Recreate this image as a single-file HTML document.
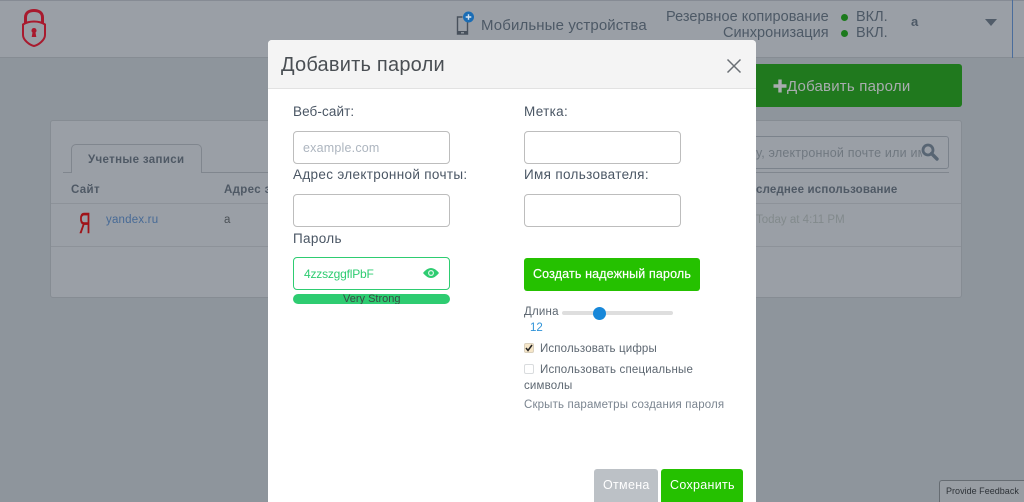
<!DOCTYPE html>
<html><head><meta charset="utf-8">
<style>
html,body{margin:0;padding:0;width:1024px;height:502px;overflow:hidden;background:#8e959c}
*{box-sizing:border-box}
body{position:relative;font-family:"Liberation Sans","DejaVu Sans",sans-serif}
.t{position:absolute;white-space:nowrap;line-height:1}
.b{position:absolute}
.inp{position:absolute;background:#fff;border:1px solid #bdbdbd;border-radius:4px;width:157px;height:33px}
.lab{color:#4a5664;font-size:13.5px;letter-spacing:.33px}
</style></head><body>
<div class="b" style="left:0;top:0;width:1024px;height:58px;background:#9a9fa6;border-top:1px solid #868b94;border-bottom:1px solid #868c93"></div>
<div class="b" style="left:1012px;top:0;width:1px;height:58px;background:#4a6d9c"></div>
<svg class="b" style="left:20px;top:8px" width="30" height="40" viewBox="0 0 30 40">
<path d="M5.500 15V9.500C5.500 4.500 9.500 2.500 14 2.500S22.500 4.500 22.500 9.500V15" fill="none" stroke="#a81a2e" stroke-width="3"/>
<path d="M14 13.500C9.500 13.500 6 14.500 3 16.500V27C3 32 9.500 37 14 38C18.500 37 25 32 25 27V16.500C22 14.500 18.500 13.500 14 13.500Z" fill="none" stroke="#a81a2e" stroke-width="2"/>
<path d="M14 20a2.500 2.500 0 0 1 1.500 4.500l.8 4.500h-4.600l.8-4.500a2.500 2.500 0 0 1 1.500-4.500Z" fill="#a81a2e"/>
</svg>
<svg class="b" style="left:455px;top:11px" width="22" height="26" viewBox="0 0 22 26">
<path d="M7.500 6H2.500V23H12.500V11" fill="none" stroke="#48515c" stroke-width="1.400"/>
<rect x="2" y="20" width="11" height="3.500" fill="#48515c"/><rect x="6" y="21" width="3" height="1.500" fill="#8e959c"/>
<circle cx="13.500" cy="6" r="5.500" fill="#1b6db5"/><path d="M13.500 3.200v5.600M10.700 6h5.600" stroke="#d7e4f0" stroke-width="1.400"/>
</svg>
<div class="t" style="left:481px;top:18px;font-size:15px;color:#4d5966;letter-spacing:.12px">Мобильные устройства</div>
<div class="t" style="left:666px;top:10px;font-size:14.500px;color:#4d5966;letter-spacing:.05px">Резервное копирование</div>
<div class="t" style="left:723px;top:26px;font-size:14.500px;color:#4d5966;letter-spacing:.05px">Синхронизация</div>
<div class="b" style="left:841px;top:14px;width:7px;height:7px;border-radius:50%;background:#1c7a1c"></div>
<div class="b" style="left:841px;top:30px;width:7px;height:7px;border-radius:50%;background:#1c7a1c"></div>
<div class="t" style="left:856px;top:10px;font-size:14.500px;color:#4d5966">ВКЛ.</div>
<div class="t" style="left:856px;top:26px;font-size:14.500px;color:#4d5966">ВКЛ.</div>
<div class="t" style="left:911px;top:15px;font-size:13px;font-weight:bold;color:#4d5966">a</div>
<div class="b" style="left:985px;top:19px;border-left:6px solid transparent;border-right:6px solid transparent;border-top:7px solid #515c69"></div>

<div class="b" style="left:750px;top:64px;width:212px;height:43px;background:#20791e;border-radius:3px"></div>
<svg class="b" style="left:773px;top:79px" width="14" height="14" viewBox="0 0 14 14"><path d="M7 0.500V13.500M0.500 7H13.500" stroke="#a9adaf" stroke-width="3.400"/></svg>
<div class="t" style="left:787px;top:79px;font-size:15px;color:#a9adaf;letter-spacing:.2px">Добавить пароли</div>

<div class="b" style="left:50px;top:120px;width:912px;height:178px;background:#9a9fa6;border:1px solid #868c93;border-radius:3px"></div>
<div class="b" style="left:63px;top:172px;width:886px;height:1px;background:#80868e"></div>
<div class="b" style="left:71px;top:144px;width:131px;height:29px;background:#9a9fa6;border:1px solid #80868e;border-bottom:none;border-radius:5px 5px 0 0"></div>
<div class="t" style="left:88px;top:155px;font-size:11.500px;font-weight:bold;color:#4f5965;letter-spacing:.35px">Учетные записи</div>
<div class="t" style="left:71px;top:185px;font-size:11.500px;font-weight:bold;color:#4f5965;letter-spacing:.35px">Сайт</div>
<div class="t" style="left:224px;top:185px;font-size:11.500px;font-weight:bold;color:#4f5965;letter-spacing:.35px">Адрес э</div>
<div class="t" style="left:756px;top:185px;font-size:11.500px;font-weight:bold;color:#4f5965;letter-spacing:.17px">следнее использование</div>
<div class="b" style="left:51px;top:203px;width:910px;height:1px;background:#8d9299"></div>
<div class="b" style="left:51px;top:246px;width:910px;height:1px;background:#8d9299"></div>
<div class="t" style="left:79px;top:210px;font-size:29px;color:#a01318;transform:scaleX(.55);transform-origin:left;-webkit-text-stroke:.5px #a01318">Я</div>
<div class="t" style="left:106px;top:215px;font-size:11.500px;color:#476a96;letter-spacing:.2px">yandex.ru</div>
<div class="t" style="left:224px;top:215px;font-size:11.500px;color:#4a5056">a</div>
<div class="t" style="left:756px;top:215px;font-size:11.500px;color:#828a8c">Today at 4:11 PM</div>
<div class="b" style="left:740px;top:136px;width:209px;height:33px;background:#9a9fa6;border:1px solid #7b828b;border-radius:3px"></div>
<div class="t" style="left:756px;top:147px;font-size:12.500px;color:#707880;letter-spacing:.2px;width:166px;overflow:hidden">у, электронной почте или им</div>
<svg class="b" style="left:920px;top:142px" width="20" height="20" viewBox="0 0 20 20"><circle cx="8" cy="8" r="5" fill="none" stroke="#586573" stroke-width="2.800"/><path d="M11.500 11.500L17 17" stroke="#586573" stroke-width="3.400" stroke-linecap="round"/></svg>

<div class="b" style="left:268px;top:40px;width:488px;height:462px;background:#fff;border-radius:4px 4px 0 0"></div>
<div class="b" style="left:268px;top:40px;width:488px;height:49px;background:#f4f4f4;border-bottom:1px solid #e2e2e2;border-radius:4px 4px 0 0"></div>
<div class="t" style="left:281px;top:55px;font-size:20px;color:#4a4f54;letter-spacing:.22px">Добавить пароли</div>
<svg class="b" style="left:726px;top:58px" width="16" height="16" viewBox="0 0 16 16"><path d="M1.500 1.500L14.500 14.500M14.500 1.500L1.500 14.500" stroke="#6a6f74" stroke-width="1.500"/></svg>

<div class="t lab" style="left:293px;top:105px;letter-spacing:.1px">Веб-сайт:</div>
<div class="inp" style="left:293px;top:131px"></div>
<div class="t" style="left:303px;top:142px;font-size:12.500px;color:#adb5bf;letter-spacing:.2px">example.com</div>
<div class="t lab" style="left:524px;top:105px">Метка:</div>
<div class="inp" style="left:524px;top:131px"></div>
<div class="t lab" style="left:293px;top:168px">Адрес электронной почты:</div>
<div class="inp" style="left:293px;top:194px"></div>
<div class="t lab" style="left:524px;top:168px">Имя пользователя:</div>
<div class="inp" style="left:524px;top:194px"></div>
<div class="t lab" style="left:293px;top:232px">Пароль</div>
<div class="inp" style="left:293px;top:257px;border-color:#2ecc71"></div>
<div class="t" style="left:304px;top:268px;font-size:12px;color:#2ecc71;letter-spacing:-.2px">4zzszggflPbF</div>
<svg class="b" style="left:422px;top:266px" width="18" height="14" viewBox="0 0 18 14"><path d="M1 7Q9 -3 17 7Q9 17 1 7Z" fill="#2ecc71"/><circle cx="9" cy="7" r="3" fill="#dff5e8"/><circle cx="9" cy="7" r="1.800" fill="#2ecc71"/></svg>
<div class="b" style="left:293px;top:294px;width:157px;height:10px;background:#2ecc71;border-radius:5px;overflow:hidden"><div class="t" style="left:50px;top:0;font-size:11px;color:#3a4a44">Very Strong</div></div>

<div class="b" style="left:524px;top:258px;width:176px;height:33px;background:#25c100;border-radius:3px"></div>
<div class="t" style="left:533px;top:268px;font-size:12.500px;color:#fff;letter-spacing:.14px;-webkit-text-stroke:.2px #fff">Создать надежный пароль</div>
<div class="t" style="left:524px;top:307px;font-size:11.500px;color:#5d6771;letter-spacing:.2px">Длина</div>
<div class="b" style="left:562px;top:311px;width:111px;height:4px;background:#dedede;border-radius:2px"></div>
<div class="b" style="left:593px;top:307px;width:13px;height:13px;background:#1787d9;border-radius:50%"></div>
<div class="t" style="left:530px;top:323px;font-size:11.500px;color:#2f93d8">12</div>
<div class="b" style="left:524px;top:343px;width:10px;height:10px;background:#f6e6c8;border:1px solid #d9d0bd;border-radius:2px"></div>
<svg class="b" style="left:525px;top:344px" width="8" height="8" viewBox="0 0 8 8"><path d="M1 4L3 6.500L7 1" fill="none" stroke="#222" stroke-width="1.500"/></svg>
<div class="t" style="left:540px;top:344px;font-size:11.500px;color:#5d6771;letter-spacing:.14px">Использовать цифры</div>
<div class="b" style="left:524px;top:364px;width:10px;height:10px;background:#fff;border:1px solid #d9dcde;border-radius:2px"></div>
<div class="t" style="left:540px;top:365px;font-size:11.500px;color:#5d6771;letter-spacing:.18px">Использовать специальные</div>
<div class="t" style="left:524px;top:381px;font-size:11.500px;color:#5d6771;letter-spacing:.18px">символы</div>
<div class="t" style="left:524px;top:400px;font-size:11.500px;color:#7b8590;letter-spacing:.15px">Скрыть параметры создания пароля</div>

<div class="b" style="left:594px;top:469px;width:64px;height:33px;background:#bcc1c6;border-radius:3px 3px 0 0"></div>
<div class="t" style="left:603px;top:479px;font-size:12.500px;color:#fff;letter-spacing:.3px">Отмена</div>
<div class="b" style="left:661px;top:469px;width:82px;height:33px;background:#25c100;border-radius:3px 3px 0 0"></div>
<div class="t" style="left:670px;top:479px;font-size:12.500px;color:#fff;letter-spacing:.3px">Сохранить</div>

<div class="b" style="left:939px;top:480px;width:85px;height:22px;background:#989da3;border:1px solid #666c72;border-bottom:none;border-right:none;border-radius:3px 0 0 0"></div>
<div class="t" style="left:946px;top:487px;font-size:9px;color:#2e3338;letter-spacing:.02px">Provide Feedback</div>
</body></html>
